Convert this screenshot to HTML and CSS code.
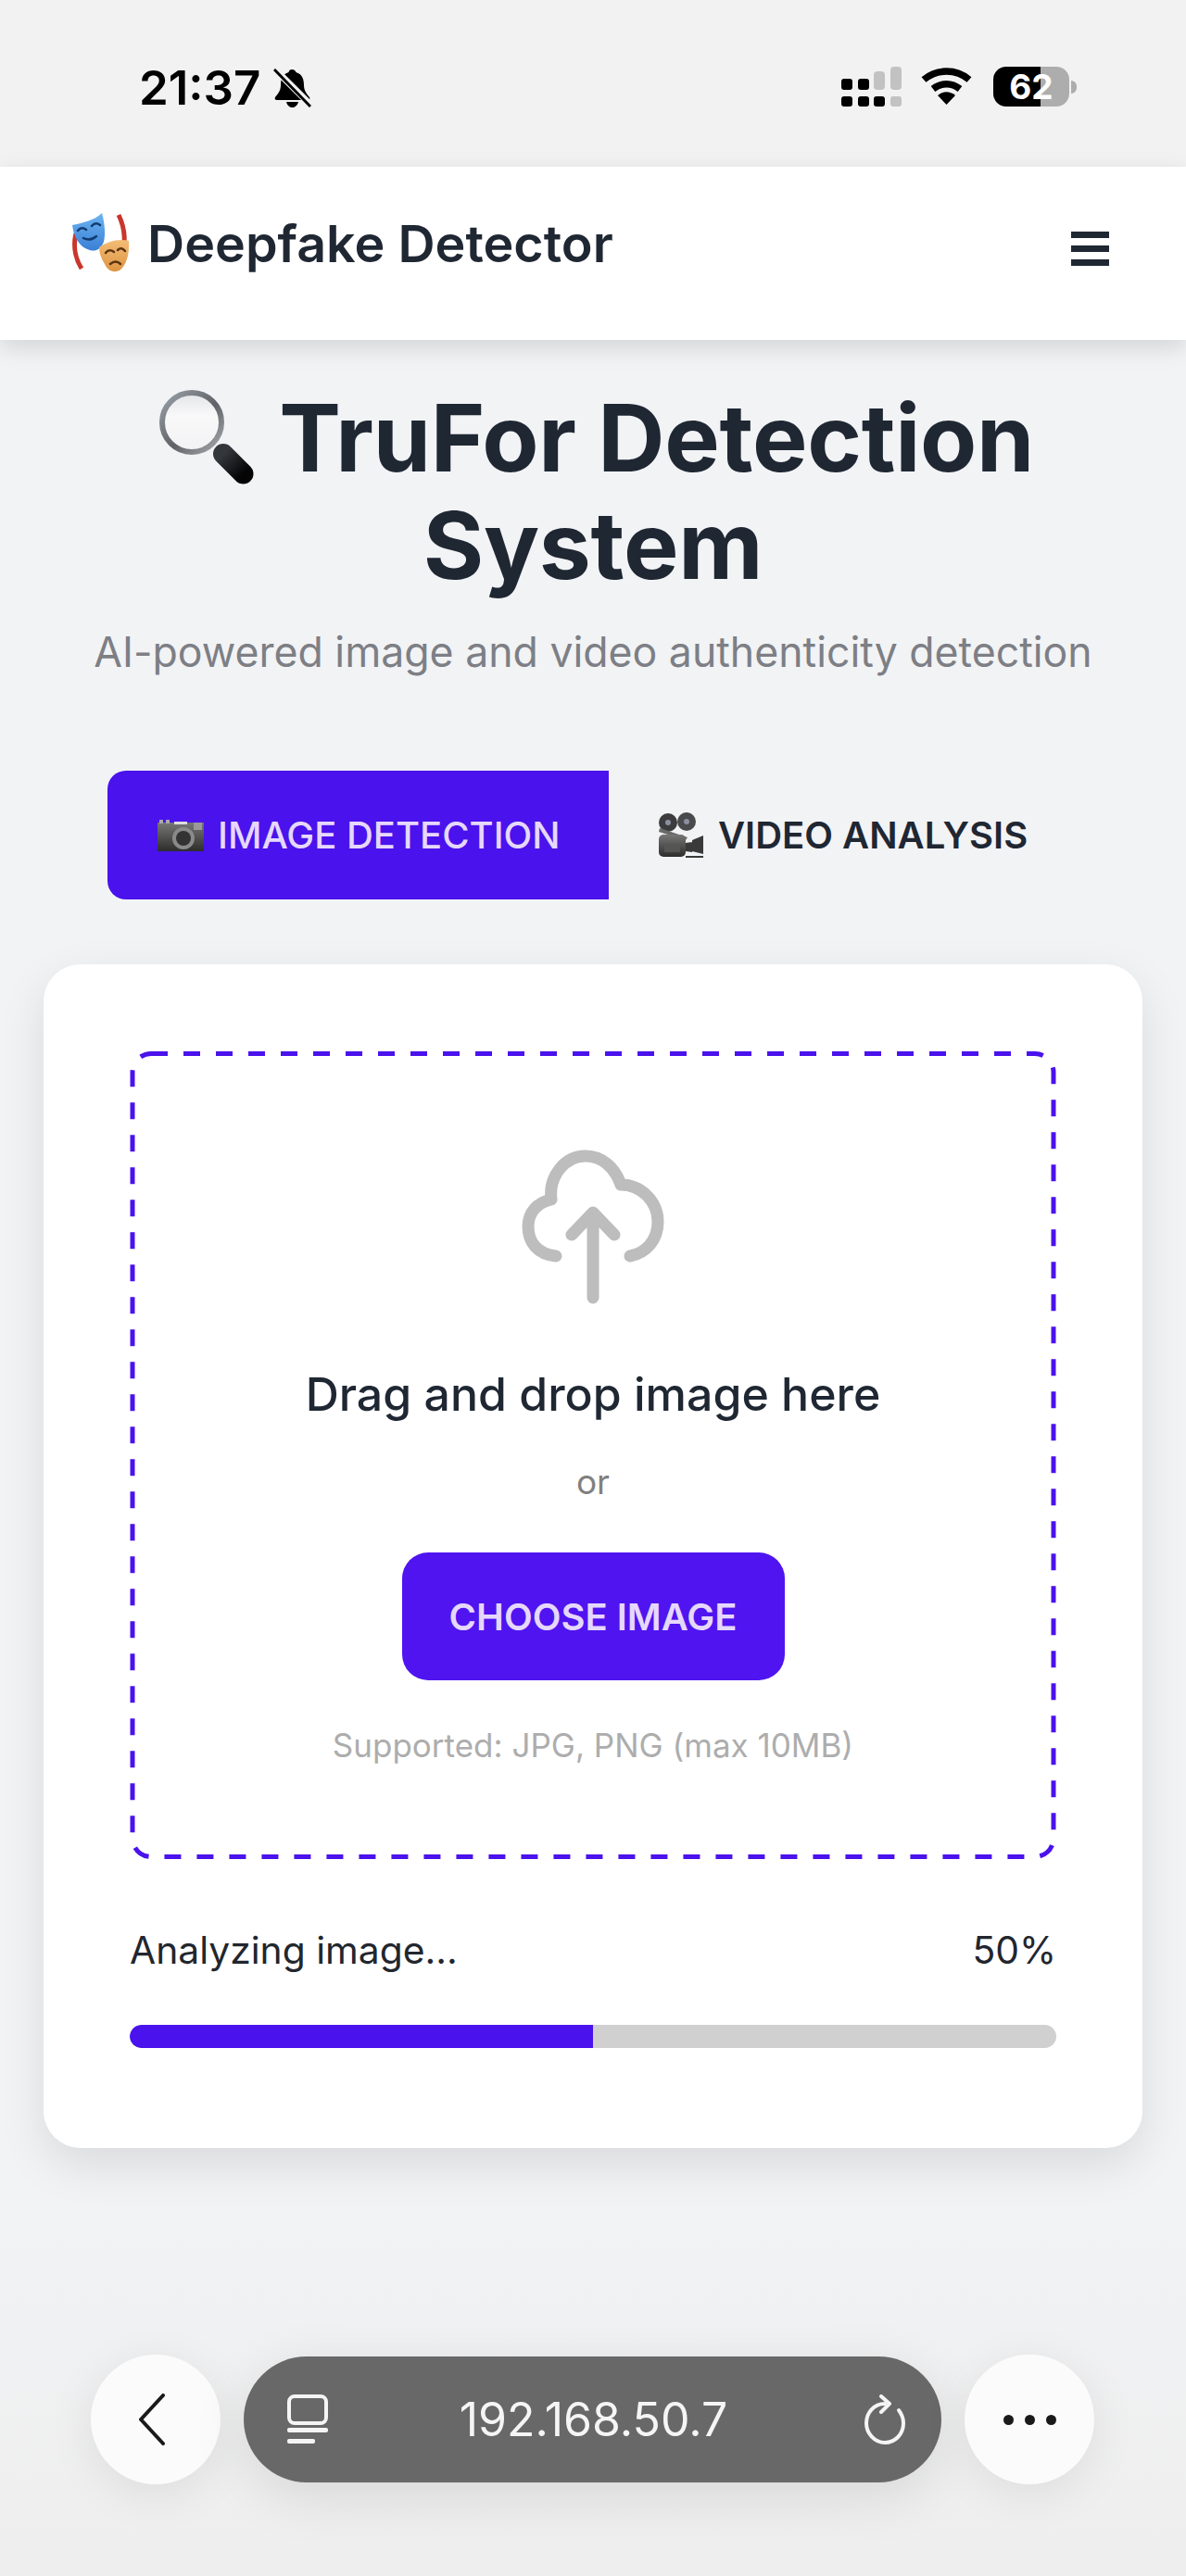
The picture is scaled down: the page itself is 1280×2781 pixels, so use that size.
FILE: index.html
```html
<!DOCTYPE html>
<html lang="en">
<head>
  <meta charset="UTF-8">
  <title>Deepfake Detector</title>
  <link rel="stylesheet" href="styles.css">
</head>
<body>
  <svg class="defs" width="0" height="0">
    <defs>
      <linearGradient id="blueMask" x1="0" y1="0" x2="0" y2="1"><stop offset="0" stop-color="#6cb4f0"/><stop offset="1" stop-color="#3a7fd6"/></linearGradient>
      <linearGradient id="goldMask" x1="0" y1="0" x2="0" y2="1"><stop offset="0" stop-color="#f3bd76"/><stop offset="1" stop-color="#dd9442"/></linearGradient>
      <linearGradient id="handle" x1="0" y1="0" x2="1" y2="1"><stop offset="0" stop-color="#33373c"/><stop offset="1" stop-color="#050506"/></linearGradient>
      <linearGradient id="lensRim" x1="0" y1="0" x2="1" y2="1"><stop offset="0" stop-color="#9aa2aa"/><stop offset="0.55" stop-color="#5f6266"/><stop offset="1" stop-color="#a9acb0"/></linearGradient>
      <linearGradient id="lensGlass" x1="0" y1="0" x2="0" y2="1"><stop offset="0" stop-color="#e4e5e8"/><stop offset="0.4" stop-color="#f9f9fa"/><stop offset="1" stop-color="#f2f2f4"/></linearGradient>
      <linearGradient id="camBody" x1="0" y1="0" x2="0" y2="1"><stop offset="0" stop-color="#777"/><stop offset="1" stop-color="#2d2d2b"/></linearGradient>
    </defs>
  </svg>

  <div class="status-bar">
    <div class="status-left">
      <span class="clock">21:37</span>
      <svg class="bell" viewBox="0 0 41 43">
        <path d="M20 1c-2 0-3 1-3.500 3C10 6 8 11 8 18c0 6-3 9-6 13-1 2 0 3 2 3h33c2 0 3-1 2-3-3-4-6-7-6-13 0-7-2-12-8.500-14C24 2 22 1 20 1zM14 36c1 4 4 6 6.500 6s5.500-2 6.500-6z" fill="#000"/>
        <path d="M2 1l38 38" stroke="#f2f2f2" stroke-width="7"/>
        <path d="M1 1l39 40" stroke="#000" stroke-width="3"/>
      </svg>
    </div>
    <div class="status-right">
      <div class="signal">
        <i class="sig sig-off tall"></i><i class="sig sig-off mid"></i>
        <i class="dot"></i><i class="dot"></i><i class="dot"></i><i class="dot off"></i>
      </div>
      <svg class="wifi" viewBox="0 0 55 40">
        <path d="M3 13C17 1 38 1 52 13" fill="none" stroke="#000" stroke-width="7.500"/>
        <path d="M13 23c9-7 20-7 29 0" fill="none" stroke="#000" stroke-width="7.500"/>
        <path d="M18 30c6-5 13-5 19 0L27.500 40z" fill="#000"/>
      </svg>
      <div class="battery"><span>62</span></div>
      <i class="battery-nub"></i>
    </div>
  </div>

  <nav class="navbar">
    <a class="brand">
      <svg class="brand-icon" viewBox="0 0 80 100">
        <path d="M22 42C18 58 23 72 28 80" fill="none" stroke="#c8372b" stroke-width="5"/>
        <path d="M68 22c5 10 7 20 6 32" fill="none" stroke="#c8372b" stroke-width="5"/>
        <path d="M18 33c10-2 24-5 32-13 3 11 4 22 2 31-3 8-9 11-15 9-11-3-17-13-19-27z" fill="url(#blueMask)"/>
        <path d="M24 39q4-5 9-1M39 34q4-5 9-1M30 47q7 4 14-2" fill="none" stroke="#123a70" stroke-width="2.500" stroke-linecap="round"/>
        <path d="M47 57c8-6 22-10 32-7 1 15-3 27-10 32-7 3-13 0-16-7-4-6-6-12-6-18z" fill="url(#goldMask)"/>
        <path d="M54 63q4-5 9-1M67 60q4-4 8 1M59 75q6-5 11 0" fill="none" stroke="#5b3410" stroke-width="2.500" stroke-linecap="round"/>
      </svg>
      <span>Deepfake Detector</span>
    </a>
    <div class="burger"><i></i><i></i><i></i></div>
  </nav>

  <main class="content">
    <h1 class="page-title">
      <svg class="title-icon" viewBox="0 0 104 104">
        <path d="M71 71l21.500 21.500" stroke="url(#handle)" stroke-width="22" stroke-linecap="round"/>
        <circle cx="37" cy="37" r="32" fill="url(#lensGlass)" stroke="url(#lensRim)" stroke-width="6"/>
      </svg>
      TruFor Detection System
    </h1>
    <p class="subtitle">AI-powered image and video authenticity detection</p>

    <div class="tabs">
      <button class="tab active">
        <svg class="tab-icon" viewBox="0 0 50 34">
          <rect x="0" y="3" width="50" height="31" fill="url(#camBody)"/>
          <rect x="2" y="0" width="4" height="4" fill="#aaa"/><rect x="9" y="0" width="4" height="4" fill="#aaa"/>
          <rect x="18" y="2" width="14" height="3" fill="#ddd"/><rect x="39" y="3" width="9" height="8" fill="#999"/>
          <circle cx="28" cy="20" r="12" fill="#8a8a8a"/><circle cx="28" cy="20" r="8" fill="#333"/>
        </svg>
        IMAGE DETECTION
      </button>
      <button class="tab">
        <svg class="tab-icon tab-icon-video" viewBox="0 0 50 50">
          <circle cx="11" cy="11" r="10" fill="#3c3c3e"/><circle cx="31" cy="10" r="10" fill="#4a4a4c"/>
          <circle cx="11" cy="11" r="3" fill="#8b8fa0"/><circle cx="31" cy="10" r="3" fill="#8b8fa0"/>
          <path d="M2 17l30 10-2 3L1 21z" fill="#6a6a6a"/>
          <rect x="1" y="24" width="29" height="24" rx="5" fill="url(#camBody)"/>
          <rect x="7" y="36" width="17" height="7" rx="1" fill="#555"/>
          <path d="M30 33l7-1v11l-7-1zM37 30l12-5v20l-12-3zM30 47h19v2H30z" fill="#3a3a3a"/>
        </svg>
        VIDEO ANALYSIS
      </button>
    </div>

    <section class="card">
      <div class="dropzone">
        <svg class="dash-frame" width="1000" height="872">
          <rect x="3" y="2.500" width="994" height="867" rx="20" class="dash-rect"/>
        </svg>
        <svg class="cloud" viewBox="0 0 200 200">
          <path d="M60 137C40 135 30 122 30 105 30 90 40 79 55 76 52 50 70 29 92 29c18 0 32 13 38 31 22 0 40 18 40 40 0 20-13 34-30 37" fill="none" stroke="#bdbdbd" stroke-width="13" stroke-linecap="round" stroke-linejoin="round"/>
          <path d="M100 90v92M77 114l23-24 23 24" fill="none" stroke="#bdbdbd" stroke-width="13" stroke-linecap="round" stroke-linejoin="round"/>
        </svg>
        <h3 class="drop-title">Drag and drop image here</h3>
        <p class="drop-or">or</p>
        <button class="choose-btn">CHOOSE IMAGE</button>
        <p class="drop-hint">Supported: JPG, PNG (max 10MB)</p>
      </div>
      <div class="progress-row">
        <span>Analyzing image...</span>
        <span>50%</span>
      </div>
      <div class="progress-track"><div class="progress-fill" style="width: 50%"></div></div>
    </section>
  </main>

  <div class="toolbar">
    <button class="round-btn">
      <svg class="chevron" viewBox="0 0 30 56"><path d="M27 2L3 28l24 26" fill="none" stroke="#1a1a1a" stroke-width="4" stroke-linecap="round" stroke-linejoin="round"/></svg>
    </button>
    <div class="url-pill">
      <svg class="tabs-icon" viewBox="0 0 46 54">
        <rect x="3" y="2" width="40" height="29" rx="6" fill="none" stroke="#f5f5f5" stroke-width="4"/>
        <rect x="1" y="36" width="44" height="5" rx="2" fill="#f5f5f5"/>
        <rect x="1" y="48" width="30" height="5" rx="2" fill="#f5f5f5"/>
      </svg>
      <span class="url-text">192.168.50.7</span>
      <svg class="reload-icon" viewBox="0 0 46 54">
        <path d="M23 10C11 10 3 20 3 31s9 21 20 21 20-9 20-21c0-5-2-10-5-14" fill="none" stroke="#f5f5f5" stroke-width="4" stroke-linecap="round"/>
        <path d="M19 2l9 8-9 9" fill="none" stroke="#f5f5f5" stroke-width="4" stroke-linecap="round" stroke-linejoin="round"/>
      </svg>
    </div>
    <button class="round-btn">
      <div class="more-dots"><i></i><i></i><i></i></div>
    </button>
  </div>
</body>
</html>
```

FILE: styles.css
```css
* {
  box-sizing: border-box;
}
html, body {
  margin: 0;
  height: 2781px;
  overflow: hidden;
}
body {
  background: linear-gradient(#f2f3f5 85%, #eeeeee);
  color: #1f2733;
  font-family: Inter, "Noto Sans", sans-serif;
}
button {
  font-family: inherit;
  border: none;
  cursor: pointer;
}
.defs {
  position: absolute;
}

/* status bar */
.status-bar {
  height: 180px;
  background: #f2f2f2;
  display: flex;
  justify-content: space-between;
  padding: 72px 118px 0 150px;
}
.status-left {
  display: flex;
  align-items: flex-start;
  gap: 14px;
}
.clock {
  font-size: 51px;
  line-height: 46px;
  font-weight: 600;
  color: #000;
}
.bell {
  width: 41px;
  height: 43px;
  margin-top: 2px;
}
.status-right {
  display: flex;
  align-items: flex-start;
}
.signal {
  width: 64px;
  height: 43px;
  margin-right: 22px;
  display: grid;
  grid-template-columns: repeat(4, 12px);
  grid-template-rows: 25px 11px;
  column-gap: 5.500px;
  row-gap: 7px;
}
.signal::before, .signal::after {
  content: "";
  background: #000;
  border-radius: 3px;
  height: 12px;
  align-self: end;
  grid-row: 1;
}
.signal::before { grid-column: 1; }
.signal::after { grid-column: 2; }
.sig {
  grid-row: 1;
  align-self: end;
  background: #c2c2c2;
  border-radius: 4px;
}
.sig.mid { grid-column: 3; height: 20px; }
.sig.tall { grid-column: 4; height: 25px; }
.dot {
  grid-row: 2;
  background: #000;
  border-radius: 3px;
}
.dot.off {
  background: #c2c2c2;
}
.wifi {
  width: 55px;
  height: 40px;
  margin: 1px 23px 0 0;
}
.battery {
  width: 82px;
  height: 43px;
  border-radius: 14px;
  background: linear-gradient(90deg, #000 62%, #adadad 62%);
  color: #fff;
  font-size: 37px;
  font-weight: 700;
  line-height: 43px;
  text-align: center;
}
.battery-nub {
  width: 6px;
  height: 14px;
  margin: 15px 0 0 2px;
  background: #adadad;
  border-radius: 0 6px 6px 0;
}

/* navbar */
.navbar {
  height: 187px;
  background: #fff;
  box-shadow: 0 8px 24px rgba(0, 0, 0, 0.13);
  position: relative;
  display: flex;
  justify-content: space-between;
  padding: 30px 83px 0 60px;
}
.brand {
  display: flex;
  align-items: flex-start;
  gap: 19px;
  font-size: 55.600px;
  line-height: 68px;
  font-weight: 600;
  color: #1f2733;
}
.brand-icon {
  width: 80px;
  height: 100px;
}
.brand span {
  margin-top: 19px;
}
.burger {
  width: 41px;
  display: flex;
  flex-direction: column;
  gap: 8px;
  margin-top: 40px;
}
.burger i {
  height: 7px;
  background: #1f2733;
}

/* heading */
.page-title {
  margin: 48px auto 0;
  width: 1100px;
  font-size: 100px;
  line-height: 116px;
  font-weight: 700;
  letter-spacing: -0.250px;
  text-align: center;
  color: #1f2733;
}
.title-icon {
  width: 104px;
  height: 104px;
  vertical-align: -14px;
  margin: 0 4px 0 6px;
}
.subtitle {
  margin: 27px 0 0;
  font-size: 44.600px;
  line-height: 60px;
  text-align: center;
  color: #7d7f85;
}

/* tabs */
.tabs {
  margin: 98px 0 0 116px;
  display: flex;
}
.tab {
  height: 139px;
  padding: 0 53px;
  display: flex;
  align-items: center;
  gap: 15px;
  background: transparent;
  color: #1f2733;
  font-size: 40px;
  font-weight: 600;
}
.tab.active {
  background: #4a12ec;
  color: #e6d8fc;
  font-weight: 500;
  border-radius: 20px 0 0 20px;
  width: 541px;
  padding: 0 0 0 54px;
}
.tab-icon {
  width: 50px;
  height: 34px;
}
.tab-icon-video {
  height: 50px;
}

/* card */
.card {
  margin: 70px 47px 0;
  height: 1278px;
  background: #fff;
  border-radius: 40px;
  padding: 94px 93px 0;
  box-shadow: 0 18px 50px rgba(0, 0, 0, 0.1);
}
.dropzone {
  height: 872px;
  position: relative;
  padding-top: 90px;
  display: flex;
  flex-direction: column;
  align-items: center;
  text-align: center;
}
.dash-frame {
  position: absolute;
  left: 0;
  top: 0;
}
.dash-rect {
  fill: none;
  stroke: #4a12ec;
  stroke-width: 5;
  stroke-dasharray: 18 17;
}
.cloud {
  width: 200px;
  height: 200px;
  margin: -6px 0 0 -1px;
}
.drop-title {
  margin: 54px 0 0;
  font-size: 50px;
  line-height: 64px;
  font-weight: 500;
  color: #1f2733;
}
.drop-or {
  margin: 39px 0 0;
  font-size: 37px;
  line-height: 48px;
  color: #808080;
}
.choose-btn {
  margin-top: 52px;
  width: 413px;
  height: 138px;
  border-radius: 28px;
  background: #4f14f0;
  color: #e6d8fc;
  font-size: 40px;
  font-weight: 600;
}
.drop-hint {
  margin: 48px 0 0;
  font-size: 35px;
  line-height: 44px;
  color: #adadad;
}
.progress-row {
  margin-top: 73px;
  display: flex;
  justify-content: space-between;
  font-size: 40.800px;
  line-height: 50px;
  color: #22262e;
}
.progress-track {
  margin-top: 56px;
  height: 25px;
  background: #d0d0d0;
  border-radius: 13px;
  overflow: hidden;
}
.progress-fill {
  height: 100%;
  background: #4a12ec;
  border-radius: 13px 0 0 13px;
}

/* browser toolbar */
.toolbar {
  margin-top: 223px;
  display: flex;
  justify-content: center;
  align-items: center;
  gap: 25px;
  padding-right: 1px;
}
.round-btn {
  width: 140px;
  height: 140px;
  border-radius: 50%;
  background: #fbfbfb;
  box-shadow: 0 10px 50px rgba(0, 0, 0, 0.08);
  display: flex;
  align-items: center;
  justify-content: center;
  padding: 0;
}
.chevron {
  width: 30px;
  height: 56px;
  margin-left: -8px;
}
.more-dots {
  display: flex;
  gap: 12px;
}
.more-dots i {
  width: 11px;
  height: 11px;
  border-radius: 50%;
  background: #1a1a1a;
}
.url-pill {
  width: 753px;
  height: 136px;
  border-radius: 68px;
  background: #686868;
  box-shadow: 0 14px 60px rgba(0, 0, 0, 0.1);
  display: flex;
  align-items: center;
  justify-content: space-between;
  padding: 0 38px 0 46px;
}
.tabs-icon, .reload-icon {
  width: 46px;
  height: 54px;
}
.url-text {
  font-size: 50px;
  color: #f5f5f5;
  margin-right: 6px;
}
```
